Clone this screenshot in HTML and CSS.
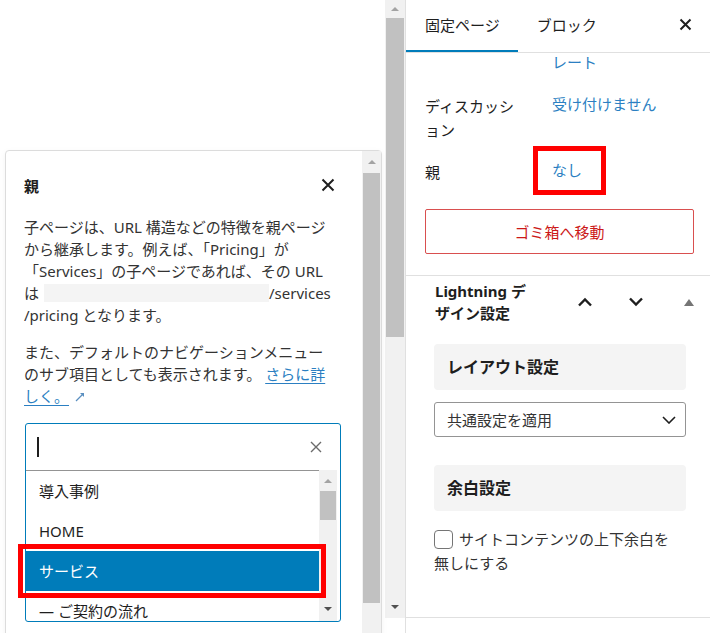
FILE: index.html
```html
<!DOCTYPE html>
<html lang="ja">
  <head>
    <meta charset="UTF-8" />
    <meta name="viewport" content="width=device-width, initial-scale=1.0" />
    <title>親ページの設定</title>
    <link rel="stylesheet" href="styles.css">
  </head>
  <body>
    <main class="editor">
      <div class="canvas">
        <!-- Parent page popover -->
        <div class="popover">
          <div class="popover-body">
            <div class="popover-head">
              <h2>親</h2>
              <button class="icon-btn" aria-label="閉じる">
                <svg width="14" height="14" viewBox="0 0 14 14"><path d="M1.5 1.5l11 11M12.5 1.5l-11 11" stroke="#1e1e1e" stroke-width="2"/></svg>
              </button>
            </div>
            <p class="help">子ページは、URL 構造などの特徴を親ページ<br>から継承します。例えば、「Pricing」が<br>「Services」の子ページであれば、その URL<br>は<span class="blur"></span>/services<br>/pricing となります。</p>
            <p class="help">また、デフォルトのナビゲーションメニュー<br>のサブ項目としても表示されます。 <a href="#">さらに詳<br>しく。</a><svg class="ext" width="10" height="10" viewBox="0 0 10 10"><path d="M1 9L7.5 2.5" stroke="#5a8fc0" stroke-width="1.2"/><path d="M5 1h4v4z" fill="#5a8fc0"/></svg></p>

            <div class="combo">
              <div class="combo-input">
                <span class="caret"></span>
                <svg width="12" height="12" viewBox="0 0 12 12"><path d="M1 1l10 10M11 1L1 11" stroke="#6b6b6b" stroke-width="1.4"/></svg>
              </div>
              <div class="combo-list">
                <ul class="options">
                  <li>導入事例</li>
                  <li>HOME</li>
                  <li class="selected">サービス</li>
                  <li>— ご契約の流れ</li>
                </ul>
                <div class="sb sb-list">
                  <span class="sb-btn top"><i class="arrow up"></i></span>
                  <span class="sb-thumb"></span>
                  <span class="sb-space"></span>
                  <span class="sb-btn bottom"><i class="arrow down"></i></span>
                </div>
              </div>
            </div>
          </div>

          <div class="sb sb-pop">
            <span class="sb-btn top"><i class="arrow up"></i></span>
            <span class="sb-thumb"></span>
            <span class="sb-space"></span>
          </div>

          <!-- highlight frame -->
          <span class="mark mark-option"></span>
        </div>
      </div>

      <div class="sb sb-main">
        <span class="sb-btn top"><i class="arrow up"></i></span>
        <span class="sb-thumb"></span>
        <span class="sb-space"></span>
        <span class="sb-btn bottom"><i class="arrow down"></i></span>
      </div>
    </main>

    <aside class="sidebar">
      <div class="sidebar-head">
        <div class="tabs">
          <button class="tab active">固定ページ</button>
          <button class="tab">ブロック</button>
        </div>
        <button class="icon-btn head-close" aria-label="閉じる">
          <svg width="13" height="13" viewBox="0 0 13 13"><path d="M1.5 1.5l10 10M11.5 1.5l-10 10" stroke="#1e1e1e" stroke-width="2"/></svg>
        </button>
      </div>

      <section class="summary">
        <div class="row row-cut">
          <span class="label"></span>
          <a class="value" href="#">レート</a>
        </div>
        <div class="row">
          <span class="label">ディスカッション</span>
          <a class="value" href="#">受け付けません</a>
        </div>
        <div class="row">
          <span class="label">親</span>
          <span class="value"><a class="picked" href="#">なし</a></span>
        </div>
        <button class="trash">ゴミ箱へ移動</button>
      </section>

      <section class="panel">
        <div class="panel-head">
          <h2>Lightning デザイン設定</h2>
          <button class="icon-btn move-up" aria-label="上へ">
            <svg width="16" height="10" viewBox="0 0 16 10"><path d="M2 8.5L8 2.5l6 6" fill="none" stroke="#1e1e1e" stroke-width="2.4"/></svg>
          </button>
          <button class="icon-btn move-down" aria-label="下へ">
            <svg width="16" height="10" viewBox="0 0 16 10"><path d="M2 1.5l6 6 6-6" fill="none" stroke="#1e1e1e" stroke-width="2.4"/></svg>
          </button>
          <button class="icon-btn toggle" aria-label="閉じる">
            <svg width="10" height="7" viewBox="0 0 10 7"><path d="M5 0l5 7H0z" fill="#757575"/></svg>
          </button>
        </div>
        <div class="panel-body">
          <h3 class="subhead">レイアウト設定</h3>
          <div class="select">
            <span>共通設定を適用</span>
            <svg width="14" height="8" viewBox="0 0 14 8"><path d="M1 1l6 6 6-6" fill="none" stroke="#1e1e1e" stroke-width="1.6"/></svg>
          </div>
          <h3 class="subhead spaced">余白設定</h3>
          <label class="check"><span class="box"></span>サイトコンテンツの上下余白を<br>無しにする</label>
        </div>
      </section>
    </aside>
  </body>
</html>
```

FILE: styles.css
```css
* {
  margin: 0;
  padding: 0;
  box-sizing: border-box;
}

html,
body {
  width: 100%;
  height: 100%;
  overflow: hidden;
}

body {
  display: flex;
  font-family: "Noto Sans", "Noto Sans CJK JP", sans-serif;
  font-size: 15px;
  color: #1e1e1e;
  background: #fff;
}

button {
  font: inherit;
  color: inherit;
  background: none;
  border: 0;
  cursor: pointer;
}

a {
  color: #2b7fc2;
  text-decoration: none;
}

.icon-btn {
  display: flex;
  align-items: center;
  justify-content: center;
}

/* Editor area */
.editor {
  display: flex;
  width: 405px;
  flex: none;
}

.canvas {
  position: relative;
  flex: 1;
}

.popover {
  position: absolute;
  left: 5px;
  top: 150px;
  width: 377px;
  height: 500px;
  display: flex;
  background: #fff;
  border: 1px solid #dcdcdc;
  border-radius: 4px;
  box-shadow: 0 2px 6px rgba(0, 0, 0, 0.05);
}

.popover-body {
  flex: 1;
  padding: 17px 21px 0 18px;
}

.popover-head {
  display: flex;
  align-items: center;
  justify-content: space-between;
  height: 34px;
  padding-right: 6px;
}

.popover-head h2 {
  font-size: 15px;
  font-weight: 700;
}

.help {
  margin-top: 14px;
  line-height: 22px;
  white-space: nowrap;
  color: #333;
}
.help + .help {
  margin-top: 15px;
}
.help a {
  text-decoration: underline;
  text-underline-offset: 3px;
}
.help .ext {
  margin-left: 6px;
  vertical-align: 0;
}

.blur {
  display: inline-block;
  width: 225px;
  height: 18px;
  margin-left: 5px;
  vertical-align: -3px;
  background: #f4f4f4;
}

/* Combobox */
.combo {
  margin: 16px 0 0 1px;
  border: 1px solid #007cba;
  border-radius: 3px;
  overflow: hidden;
}

.combo-input {
  height: 46px;
  display: flex;
  align-items: center;
  justify-content: space-between;
  padding: 0 18px 0 11px;
}

.caret {
  width: 1.5px;
  height: 20px;
  background: #1e1e1e;
}

.combo-list {
  display: flex;
  height: 151px;
  padding-right: 3px;
}

.options {
  flex: 1;
  list-style: none;
  border-top: 1px solid #949494;
}
.options li {
  height: 40px;
  line-height: 40px;
  padding-left: 13px;
  white-space: nowrap;
}
.options li.selected {
  background: #007cba;
  color: #fff;
}

/* Fake scrollbars */
.sb {
  display: flex;
  flex-direction: column;
  align-items: center;
  flex: none;
  background: #f1f1f1;
}
.sb-btn {
  display: flex;
  align-items: center;
  justify-content: center;
  width: 100%;
  flex: none;
}
.sb-thumb {
  width: calc(100% - 2px);
  flex: none;
  background: #c1c1c1;
}
.sb-space {
  flex: 1;
}

.arrow {
  width: 0;
  height: 0;
  border-left: 4px solid transparent;
  border-right: 4px solid transparent;
}
.arrow.up {
  border-bottom: 4px solid #a3a3a3;
}
.arrow.down {
  border-top: 4px solid #505050;
}

.sb-main {
  width: 20px;
  height: 618px;
}
.sb-main .top {
  height: 18px;
}
.sb-main .sb-thumb {
  height: 319px;
}
.sb-main .bottom {
  height: 22px;
}

.sb-pop {
  width: 19px;
}
.sb-pop .top {
  height: 22px;
}
.sb-pop .sb-thumb {
  height: 430px;
}

.sb-list {
  width: 18px;
}
.sb-list .top {
  height: 21px;
}
.sb-list .sb-thumb {
  height: 29px;
}
.sb-list .bottom {
  height: 24px;
}

/* Red annotation frames */
.mark {
  position: absolute;
  border: 5px solid #f00;
  pointer-events: none;
}
.mark-option {
  left: 12px;
  top: 393px;
  width: 308px;
  height: 54px;
}

/* Settings sidebar */
.sidebar {
  flex: 1;
  border-left: 1px solid #e0e0e0;
}

.sidebar-head {
  height: 53px;
  display: flex;
  align-items: center;
  justify-content: space-between;
  padding-right: 13px;
  border-bottom: 1px solid #e0e0e0;
}

.tabs {
  display: flex;
  height: 100%;
}
.tab {
  height: 52px;
  padding: 0 18px 4px 19px;
}
.tab.active {
  box-shadow: inset 0 -2px 0 #007cba;
}

.head-close {
  width: 24px;
  height: 24px;
  margin-bottom: 4px;
}

.summary {
  padding: 0 16px 21px 19px;
  border-bottom: 1px solid #e0e0e0;
}

.row {
  display: grid;
  grid-template-columns: 100px 1fr;
  column-gap: 27px;
  margin-top: 18px;
  align-items: start;
}
.row-cut {
  margin-top: 0;
}
.row-cut .value {
  line-height: 18px;
}
.row + .row:nth-child(2) {
  margin-top: 23px;
}

.label {
  line-height: 24px;
  line-break: anywhere;
}
.value {
  line-height: 20px;
}

.picked {
  display: inline-block;
  line-height: 21px;
  padding: 9px 19px 9px 14px;
  margin: -9px 0 -9px -14px;
  outline: 5px solid #f00;
}

.trash {
  display: block;
  width: 100%;
  height: 45px;
  margin-top: 25px;
  border: 1px solid #d94f4f;
  border-radius: 2px;
  color: #cc1818;
}

.panel {
  padding-bottom: 42px;
  border-bottom: 1px solid #e0e0e0;
}

.panel-head {
  display: flex;
  align-items: center;
  padding: 4px 12px 0 29px;
}
.panel-head h2 {
  width: 100px;
  font-size: 15px;
  font-weight: 700;
  line-height: 22px;
}
.move-up,
.move-down {
  width: 36px;
  height: 36px;
}
.move-up {
  margin-left: auto;
}
.move-down {
  margin-left: 15px;
}
.toggle {
  width: 18px;
  height: 36px;
  margin-left: 26px;
}

.panel-body {
  padding: 20px 24px 0 28px;
}

.subhead {
  height: 46px;
  line-height: 46px;
  padding-left: 13px;
  font-size: 16px;
  font-weight: 700;
  background: #f4f4f4;
  border-radius: 4px;
}
.subhead.spaced {
  margin-top: 28px;
}

.select {
  height: 35px;
  margin-top: 12px;
  display: flex;
  align-items: center;
  justify-content: space-between;
  padding: 0 9px 0 12px;
  border: 1px solid #949494;
  border-radius: 3px;
  color: #333;
}

.check {
  display: block;
  margin-top: 16px;
  line-height: 24px;
  color: #333;
}
.check .box {
  display: inline-block;
  width: 19px;
  height: 19px;
  margin-right: 6px;
  vertical-align: -4px;
  border: 1.5px solid #757575;
  border-radius: 4px;
}
```
